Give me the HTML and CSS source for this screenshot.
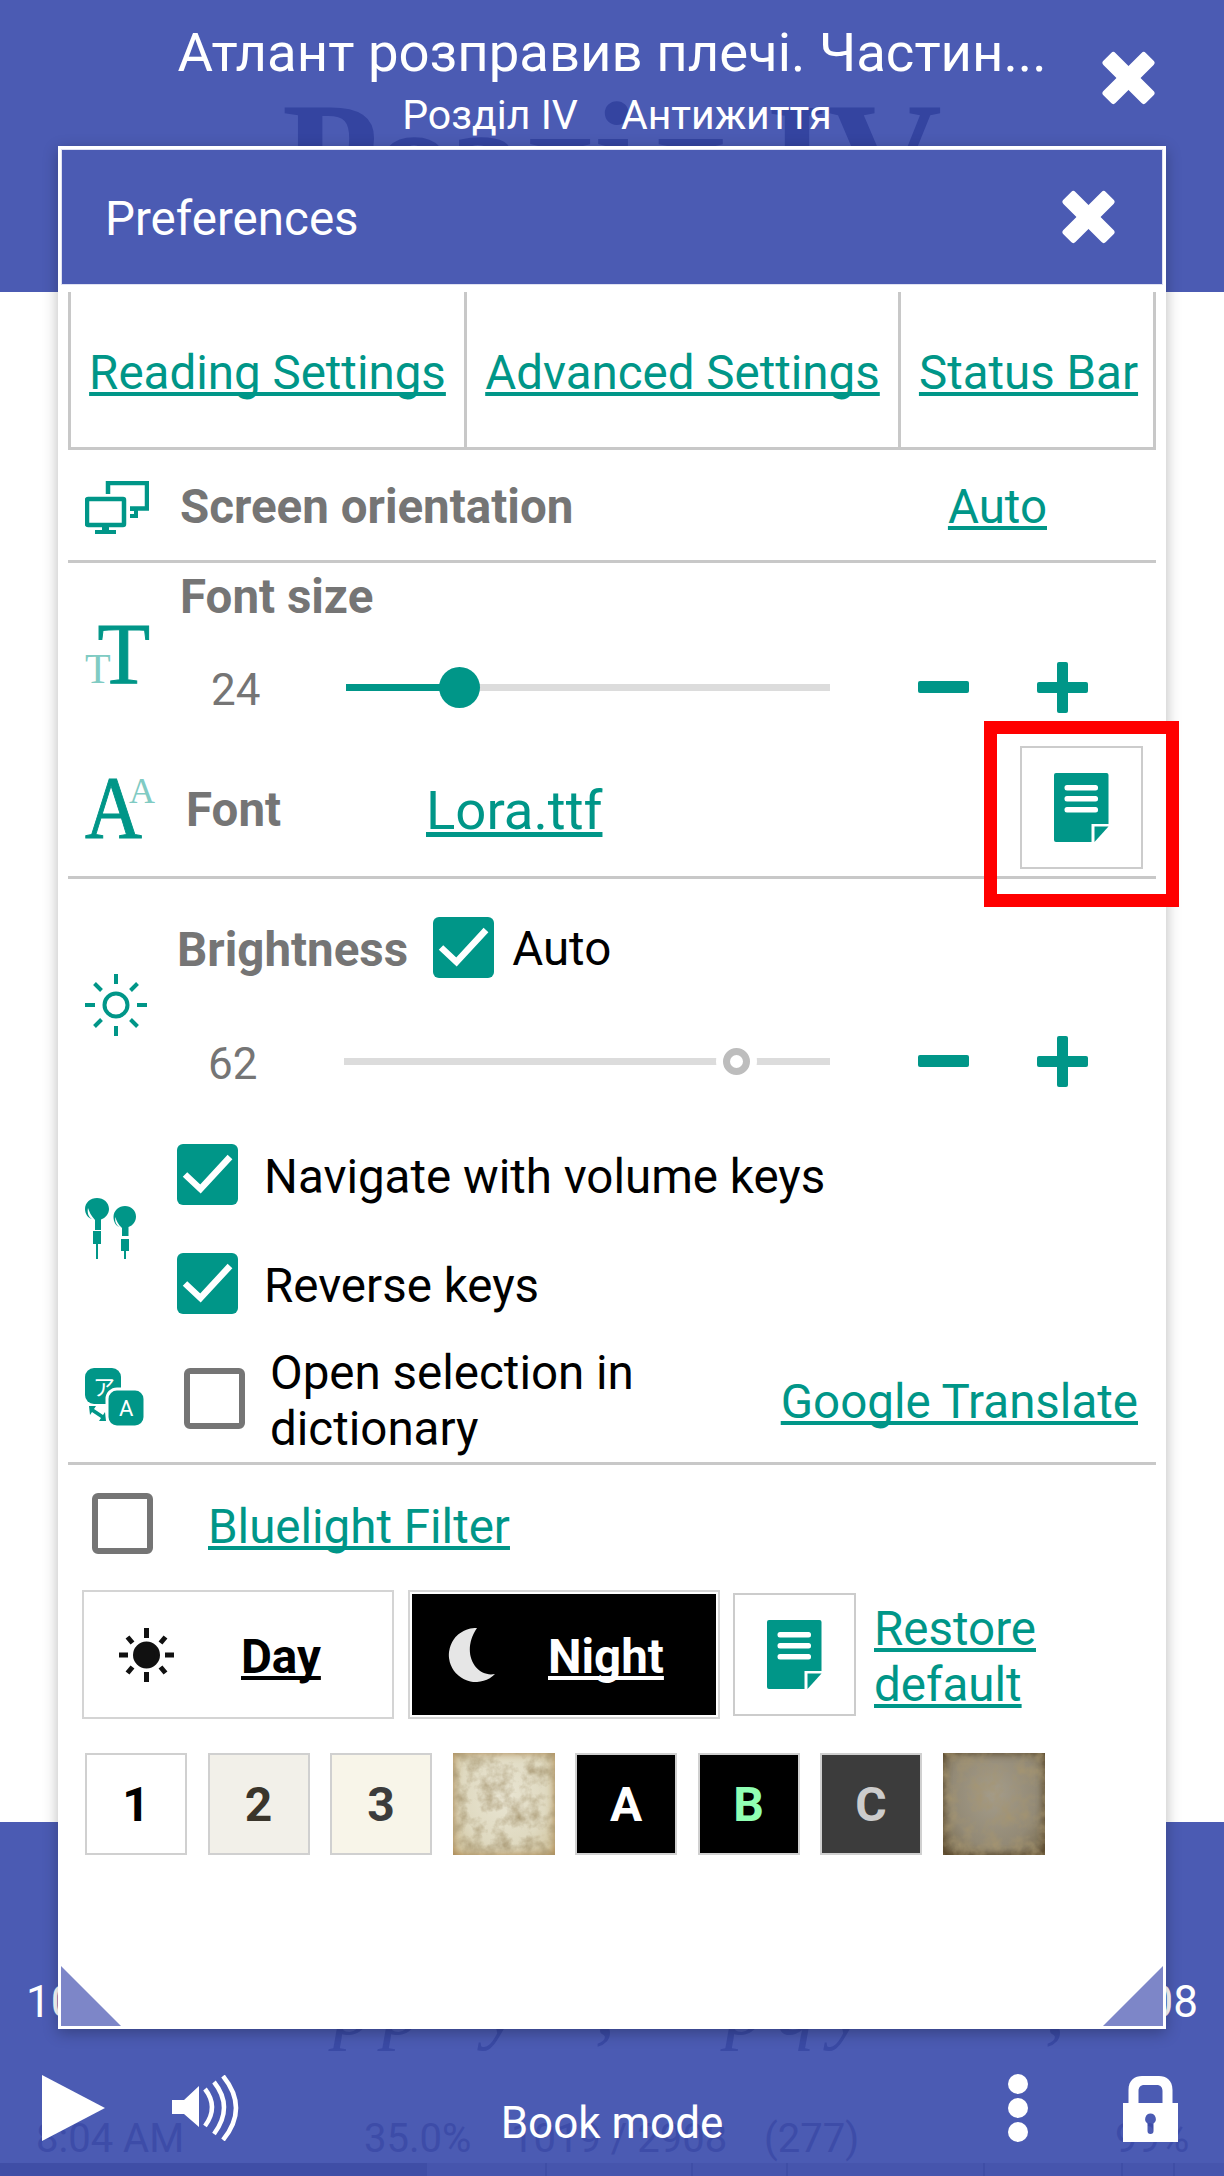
FILE: index.html
```html
<!DOCTYPE html>
<html lang="en">
<head>
    <meta charset="UTF-8">
    <meta name="viewport" content="width=device-width, initial-scale=1.0">
    <title>Preferences</title>
    <link rel="stylesheet" href="styles.css">
</head>
<body>
    <svg class="defs" width="0" height="0">
        <symbol id="i-close" viewBox="0 0 55 54">
            <rect x="-2.5" y="18.5" width="60" height="17" rx="3" transform="rotate(45 27.5 27)"/>
            <rect x="-2.5" y="18.5" width="60" height="17" rx="3" transform="rotate(-45 27.5 27)"/>
        </symbol>
        <symbol id="i-doc" viewBox="0 0 55 69">
            <path fill="#009688" d="M2 0H52.500a2 2 0 0 1 2 2V51H37.500V69H2a2 2 0 0 1-2-2V2a2 2 0 0 1 2-2Z"/>
            <path fill="#009688" d="M40.500 53.500H54.500L40.500 69Z"/>
            <rect x="10.500" y="12" width="33.500" height="5.500" rx="2.500" fill="#fff"/>
            <rect x="10.500" y="23" width="33.500" height="5.500" rx="2.500" fill="#fff"/>
            <rect x="10.500" y="34" width="33.500" height="5.500" rx="2.500" fill="#fff"/>
        </symbol>
        <symbol id="i-check" viewBox="0 0 61 61">
            <path d="M8 30.500L23.500 45L53 13" fill="none" stroke="#fff" stroke-width="6.500"/>
        </symbol>
        <filter id="paper-noise" x="0" y="0" width="100%" height="100%">
            <feTurbulence type="fractalNoise" baseFrequency="0.07" numOctaves="4" seed="7"/>
            <feColorMatrix values="0 0 0 0 0.38  0 0 0 0 0.30  0 0 0 0 0.16  0 0 0 1.6 -0.62"/>
        </filter>
    </svg>

    <div class="app">
        <header class="topbar">
            <div class="ghost-title">Розділ IV</div>
            <div class="topbar-text">
                <div class="book-title">Атлант розправив плечі. Частин...</div>
                <div class="book-sub"><span>Розділ IV</span><span>Антижиття</span></div>
            </div>
            <svg class="close-top"><use href="#i-close"/></svg>
        </header>

        <main class="reading"></main>

        <footer class="bottombar">
            <div class="ghost-line"><span>p</span><span>p</span><span>y</span><span>,</span><span>p</span><span>q</span><span>y</span><span>,</span></div>
            <div class="page-nums"><span>1019</span><span>2908</span></div>
            <div class="status">
                <span>8:04 AM</span><span>35.0%</span><span>1019 / 2908</span><span>(277)</span><span>99%</span>
            </div>
            <div class="controls">
                <div class="controls-left">
                    <svg class="play" viewBox="0 0 63 66"><path d="M0 0L63 33L0 66Z"/></svg>
                    <svg class="speaker" viewBox="0 0 67 66">
                        <path class="cone" d="M0 25H12L27 11V52L12 39H0Z"/>
                        <path d="M33 14Q47 32 33 51"/>
                        <path d="M42 7Q62 32 42 59"/>
                        <path d="M51 1Q77 33 51 65"/>
                    </svg>
                </div>
                <div class="book-mode">Book mode</div>
                <div class="controls-right">
                    <div class="dots"><i></i><i></i><i></i></div>
                    <svg class="lock" viewBox="0 0 55 68">
                        <path d="M5.500 30V16C5.500 6 12 2 19 2H36C43 2 49.500 6 49.500 16V30H39.500V17C39.500 13 37 11 34 11H21C18 11 15.500 13 15.500 17V30Z"/>
                        <path fill-rule="evenodd" d="M0 29H55V68H0ZM27.500 39.500a5.500 5.500 0 0 0-3 10V57a3 3 0 0 0 6 0V49.500a5.500 5.500 0 0 0-3-10Z"/>
                    </svg>
                </div>
            </div>
            <div class="progress">
                <div class="progress-fill"></div>
                <i class="tick t1"></i><i class="tick t2"></i><i class="tick t3"></i><i class="tick t4"></i><i class="tick t5"></i><i class="tick t6"></i>
            </div>
        </footer>
    </div>

    <section class="modal">
        <div class="modal-head">
            <span>Preferences</span>
            <svg class="close-modal"><use href="#i-close"/></svg>
        </div>

        <div class="modal-body">
            <nav class="tabs">
                <a>Reading Settings</a>
                <a>Advanced Settings</a>
                <a>Status Bar</a>
            </nav>

            <div class="row row-orient divider">
                <div class="icon-cell">
                    <svg class="ic-screen" viewBox="0 0 64 53">
                        <path class="line" d="M23 13V2H62V27.500H45"/>
                        <path class="fill" d="M45 26H53V37H45V33H49V30H45Z"/>
                        <rect class="line" x="2" y="18" width="37" height="26" rx="1"/>
                        <path class="fill" d="M17 45H24V49H31V53H10V49H17Z"/>
                    </svg>
                </div>
                <span class="label">Screen orientation</span>
                <a class="link auto-link">Auto</a>
            </div>

            <div class="block">
                <div class="icon-cell">
                    <svg class="ic-size" viewBox="0 0 66 100">
                        <text class="small" x="0" y="77">T</text>
                        <text class="big" x="12.500" y="77">T</text>
                    </svg>
                </div>
                <div class="block-main">
                    <div class="label label-size">Font size</div>
                    <div class="slider-row slider-row-size">
                        <span class="num">24</span>
                        <div class="slider">
                            <div class="slider-fill"></div>
                            <div class="thumb"></div>
                        </div>
                        <i class="minus"></i>
                        <i class="plus"></i>
                    </div>
                </div>
            </div>

            <div class="row row-font divider">
                <div class="icon-cell">
                    <svg class="ic-font" viewBox="0 0 72 100">
                        <text class="big" x="0" y="77" textLength="57" lengthAdjust="spacingAndGlyphs">A</text>
                        <text class="small" x="44" y="43">A</text>
                    </svg>
                </div>
                <span class="label label-font">Font</span>
                <a class="link lora">Lora.ttf</a>
                <div class="doc-btn doc-btn-font"><svg class="doc"><use href="#i-doc"/></svg></div>
            </div>

            <div class="block">
                <div class="icon-cell icon-cell-narrow">
                    <svg class="ic-sun" viewBox="0 0 62 62">
                        <circle cx="31" cy="31" r="11.500"/>
                        <path d="M31 0V10M31 52V62M0 31H10M52 31H62M9.500 9.500L16.500 16.500M45.500 45.500L52.500 52.500M9.500 52.500L16.500 45.500M45.500 16.500L52.500 9.500"/>
                    </svg>
                </div>
                <div class="block-main">
                    <div class="bright-head">
                        <span class="label">Brightness</span>
                        <div class="cb cb-on"><svg><use href="#i-check"/></svg></div>
                        <span class="opt-text">Auto</span>
                    </div>
                    <div class="slider-row slider-row-bright">
                        <span class="num">62</span>
                        <div class="slider slider-off">
                            <div class="thumb-off"></div>
                        </div>
                        <i class="minus"></i>
                        <i class="plus"></i>
                    </div>
                </div>
            </div>

            <div class="block">
                <div class="icon-cell icon-cell-narrow">
                    <svg class="ic-buds" viewBox="0 0 52 61">
                        <path class="fill" d="M12 0C18.500 0 24 4.500 24 11C24 16 20.500 20 16 21.500V32H10V22C6 18 4 13 3 10C2 15 3.500 19 7 21C3 20 0 16 0 11C0 4.500 5.500 0 12 0Z"/>
                        <path class="fill" d="M8 33H16V46H13V61H11V46H8Z"/>
                        <path class="fill" d="M40 8C46 8 51 12.500 51 18.500C51 23.500 48 27.500 43.500 29V38H37V30C33 26.500 31 22 30.500 19C29.500 23 31 27 34.500 29C31 28 28.500 24 28.500 19C28.500 12.500 34 8 40 8Z"/>
                        <path class="fill" d="M36 41H44V53H41V61H39V53H36Z"/>
                    </svg>
                </div>
                <div class="block-main">
                    <label class="check-row check-first">
                        <div class="cb cb-on"><svg><use href="#i-check"/></svg></div>
                        <span class="opt-text">Navigate with volume keys</span>
                    </label>
                    <label class="check-row check-second">
                        <div class="cb cb-on"><svg><use href="#i-check"/></svg></div>
                        <span class="opt-text">Reverse keys</span>
                    </label>
                </div>
            </div>

            <div class="row row-dict divider">
                <div class="icon-cell icon-cell-dict">
                    <svg class="ic-trans" viewBox="0 0 60 60">
                        <rect class="fill" x="0" y="0" width="36" height="36" rx="9"/>
                        <text class="kana" x="8" y="27">ア</text>
                        <rect class="fill" x="22" y="21" width="38" height="38" rx="10" stroke="#fff" stroke-width="3"/>
                        <text class="latin" x="34" y="48">A</text>
                        <path class="fill" d="M4 38H11L9 41L18 47L20 44L21 53H14L16 50L7 44L5 47Z"/>
                    </svg>
                </div>
                <div class="cb cb-off"></div>
                <span class="opt-text dict-text">Open selection in<br>dictionary</span>
                <a class="link translate-link">Google Translate</a>
            </div>

            <div class="row row-blue">
                <div class="cb cb-off"></div>
                <a class="link blue-link">Bluelight Filter</a>
            </div>

            <div class="row row-theme">
                <div class="theme theme-day">
                    <svg class="ic-day" viewBox="0 0 55 54">
                        <ellipse cx="27.500" cy="27" rx="11" ry="11"/>
                        <path d="M27.500 0V10M27.500 44V54M0 27H9M46 27H55M8.500 9L13.500 15M41.500 39L46.500 45M8.500 45L13.500 39M41.500 15L46.500 9"/>
                    </svg>
                    <a>Day</a>
                </div>
                <div class="theme theme-night">
                    <svg class="ic-moon" viewBox="0 0 49 54"><path d="M31 0A27 27 0 1 0 49 46C30 50 14 25 31 0Z"/></svg>
                    <a>Night</a>
                </div>
                <div class="doc-btn doc-btn-restore"><svg class="doc"><use href="#i-doc"/></svg></div>
                <a class="link restore-link">Restore<br>default</a>
            </div>

            <div class="swatches">
                <div class="swatch sw-1">1</div>
                <div class="swatch sw-2">2</div>
                <div class="swatch sw-3">3</div>
                <div class="swatch sw-paper"><svg class="paper"><rect class="paper-rect" width="102" height="102"/></svg></div>
                <div class="swatch sw-a">A</div>
                <div class="swatch sw-b">B</div>
                <div class="swatch sw-c">C</div>
                <div class="swatch sw-paper-dark"><svg class="paper"><rect class="paper-rect" width="102" height="102"/></svg></div>
            </div>
        </div>

        <div class="corner corner-left"></div>
        <div class="corner corner-right"></div>
    </section>

    <div class="highlight"></div>
</body>
</html>
```

FILE: styles.css
```css
* {
    box-sizing: border-box;
}

body {
    margin: 0;
    font-family: Roboto, "Noto Sans", sans-serif;
    background-color: #fff;
    overflow: hidden;
}

.defs {
    position: absolute;
}

a {
    text-decoration: underline;
    text-decoration-skip-ink: none;
}

svg {
    display: block;
}

.app {
    display: flex;
    flex-direction: column;
    height: 2176px;
}

/* top bar */
.topbar {
    position: relative;
    height: 292px;
    display: grid;
    grid-template-columns: 123px 1fr 123px;
    background-color: #4b5bb3;
    color: #fff;
    overflow: hidden;
}

.ghost-title {
    position: absolute;
    left: 0;
    right: 0;
    top: 84px;
    text-align: center;
    font-family: "Liberation Serif", serif;
    font-weight: bold;
    font-size: 158px;
    line-height: 150px;
    color: #3444a0;
}

.topbar-text {
    position: relative;
    grid-column: 2;
    padding-top: 22px;
    text-align: center;
}

.book-title {
    font-size: 54.500px;
    line-height: 60px;
    white-space: nowrap;
}

.book-sub {
    display: flex;
    justify-content: center;
    gap: 43px;
    margin-top: 8px;
    padding-left: 10px;
    font-size: 41px;
    line-height: 50px;
}

.close-top {
    position: relative;
    grid-column: 3;
    width: 55px;
    height: 54px;
    margin-top: 51px;
    fill: #fff;
}

.reading {
    flex: 1;
}

/* bottom bar */
.bottombar {
    position: relative;
    height: 354px;
    padding-top: 155px;
    background-color: #4b5bb3;
    color: #fff;
}

.ghost-line {
    position: absolute;
    left: 0;
    top: 135px;
    display: grid;
    grid-template-columns: 49px 102px 111px 130px 51px 54px 215px auto;
    padding-left: 333px;
    font-family: "Liberation Serif", serif;
    font-style: italic;
    font-size: 80px;
    line-height: 100px;
    color: #3a4aa5;
}

.page-nums {
    position: relative;
    display: flex;
    justify-content: space-between;
    padding: 0 26px;
    font-size: 44px;
    line-height: 50px;
}

.status {
    position: absolute;
    left: 0;
    right: 0;
    top: 292px;
    display: grid;
    grid-template-columns: 328px 147px 253px 351px auto;
    padding-left: 36px;
    font-size: 40px;
    line-height: 50px;
    white-space: nowrap;
    color: #3d4ca8;
}

.controls {
    position: relative;
    display: grid;
    grid-template-columns: 1fr auto 1fr;
    height: 68px;
    margin-top: 47px;
}

.controls-left {
    display: flex;
    gap: 67px;
    padding-left: 42px;
}

.play {
    width: 63px;
    height: 66px;
    margin-top: 1px;
    fill: #fff;
}

.speaker {
    width: 67px;
    height: 66px;
    margin-top: 1px;
    fill: none;
    stroke: #fff;
    stroke-width: 4.500;
}

.speaker .cone {
    fill: #fff;
    stroke: none;
}

.book-mode {
    margin-top: 24px;
    font-size: 44px;
    line-height: 50px;
}

.controls-right {
    display: flex;
    justify-content: flex-end;
    gap: 95px;
    padding-right: 46px;
}

.dots {
    display: flex;
    flex-direction: column;
    gap: 4px;
    width: 20px;
}

.dots i {
    display: block;
    height: 20px;
    border-radius: 50%;
    background-color: #fff;
}

.lock {
    width: 55px;
    height: 68px;
    fill: #fff;
}

.progress {
    position: relative;
    height: 13px;
    margin-top: 21px;
    background-color: #4655ad;
}

.progress-fill {
    width: 427px;
    height: 100%;
    background-color: #3f4ea6;
}

.tick {
    position: absolute;
    top: 0;
    width: 2px;
    height: 13px;
    background-color: #3f4ea6;
}

.t1 { left: 545px; }
.t2 { left: 691px; }
.t3 { left: 786px; }
.t4 { left: 983px; }
.t5 { left: 1121px; }
.t6 { left: 1173px; }

/* preferences window */
.modal {
    position: absolute;
    left: 58px;
    top: 146px;
    width: 1108px;
    height: 1883px;
    border: 3px solid #fff;
    background-color: #fff;
    box-shadow: 0 4px 14px rgba(0, 0, 0, 0.28);
}

.modal-head {
    display: flex;
    justify-content: space-between;
    align-items: center;
    height: 136px;
    padding: 0 46px 0 43px;
    background-color: #4b5bb3;
    border: 1px solid #dfe1f2;
    color: #fff;
    font-size: 47.500px;
}

.modal-head span {
    padding-top: 4px;
}

.close-modal {
    width: 55px;
    height: 54px;
    fill: #fff;
}

.modal-body {
    padding: 7px 7px 0;
}

.tabs {
    display: grid;
    grid-template-columns: 396px 434px 258px;
    height: 158px;
    border-bottom: 3px solid #c8c8c8;
    border-right: 3px solid #c8c8c8;
}

.tabs a {
    display: flex;
    justify-content: center;
    align-items: center;
    padding-top: 7px;
    border-left: 3px solid #c8c8c8;
    color: #009688;
    font-size: 47.500px;
    white-space: nowrap;
}

.row {
    display: flex;
    align-items: center;
}

.divider {
    border-bottom: 3px solid #c8c8c8;
}

.icon-cell {
    flex: none;
    width: 112px;
    padding-left: 17px;
}

.icon-cell-narrow {
    width: 109px;
}

.icon-cell-dict {
    width: 116px;
}

.label {
    font-size: 47.500px;
    font-weight: bold;
    line-height: 50px;
    color: #757575;
    white-space: nowrap;
}

.link {
    color: #009688;
    font-size: 47.500px;
    line-height: 56px;
    white-space: nowrap;
}

.opt-text {
    font-size: 47.500px;
    line-height: 56px;
    color: #000;
    white-space: nowrap;
}

.row-orient {
    height: 113px;
    padding-top: 4px;
}

.ic-screen {
    width: 64px;
    height: 53px;
}

.ic-screen .line {
    fill: none;
    stroke: #009688;
    stroke-width: 4.500;
}

.ic-screen .fill {
    fill: #009688;
}

.auto-link {
    margin-left: auto;
    margin-right: 109px;
}

.block {
    display: flex;
}

.ic-size {
    width: 66px;
    height: 100px;
    margin-top: 43px;
    font-family: "Liberation Serif", serif;
    fill: #009688;
}

.ic-size .big {
    font-size: 86px;
    stroke: #009688;
    stroke-width: 1;
}

.ic-size .small {
    font-size: 42px;
    fill: #80cbc3;
}

.block-main {
    flex: 1;
}

.label-size {
    margin-top: 9px;
}

.slider-row {
    display: flex;
    align-items: center;
    height: 80px;
}

.slider-row-size {
    margin-top: 25px;
    padding-left: 31px;
}

.slider-row-bright {
    margin-top: 43px;
    padding-left: 31px;
}

.num {
    flex: none;
    width: 135px;
    padding-top: 6px;
    font-size: 44px;
    color: #757575;
}

.slider {
    position: relative;
    flex: none;
    width: 484px;
    height: 7px;
    background-color: #dcdcdc;
}

.slider-off {
    width: 486px;
}

.slider-row-bright .num {
    width: 136px;
}

.slider-fill {
    width: 113px;
    height: 100%;
    background-color: #009688;
}

.thumb {
    position: absolute;
    left: 93px;
    top: -17px;
    width: 41px;
    height: 41px;
    border-radius: 50%;
    background-color: #009688;
}

.thumb-off {
    position: absolute;
    left: 379px;
    top: -10px;
    width: 27px;
    height: 27px;
    border: 7px solid #bdbdbd;
    border-radius: 50%;
    background-color: #fff;
    box-shadow: 0 0 0 7px #fff;
}

.minus {
    flex: none;
    width: 51px;
    height: 12px;
    margin-left: 88px;
    border-radius: 2px;
    background-color: #009688;
}

.plus {
    position: relative;
    flex: none;
    width: 51px;
    height: 11px;
    margin-left: 68px;
    border-radius: 2px;
    background-color: #009688;
}

.plus::after {
    content: "";
    position: absolute;
    left: 20px;
    top: -20px;
    width: 11px;
    height: 51px;
    border-radius: 2px;
    background-color: #009688;
}

.row-font {
    height: 152px;
    padding-top: 11px;
}

.ic-font {
    width: 72px;
    height: 100px;
    margin-top: 5px;
    font-family: "Liberation Serif", serif;
    fill: #009688;
}

.ic-font .big {
    font-size: 88px;
    stroke: #009688;
    stroke-width: 1;
}

.ic-font .small {
    font-size: 36px;
    fill: #80cbc3;
}

.label-font {
    width: 240px;
    margin-left: 6px;
    padding-top: 6px;
}

.lora {
    padding-top: 5px;
    font-size: 54.500px;
}

.doc-btn {
    display: flex;
    justify-content: center;
    align-items: center;
    flex: none;
    width: 123px;
    height: 123px;
    border: 2px solid #ccc;
}

.doc-btn-font {
    margin-left: auto;
    margin-right: 13px;
}

.doc {
    width: 55px;
    height: 69px;
}

.ic-sun {
    width: 62px;
    height: 62px;
    margin-top: 95px;
    fill: none;
    stroke: #009688;
    stroke-width: 4;
}

.bright-head {
    display: flex;
    align-items: center;
    height: 62px;
    margin-top: 37px;
}

.bright-head .label {
    padding-top: 6px;
}

.bright-head .cb {
    margin-left: 25px;
}

.bright-head .opt-text {
    margin-left: 18px;
    padding-top: 4px;
}

.cb {
    flex: none;
    width: 61px;
    height: 61px;
    border-radius: 6px;
}

.cb-on {
    background-color: #009688;
}

.cb-on svg {
    width: 61px;
    height: 61px;
}

.cb-off {
    border: 6px solid #757575;
}

.ic-buds {
    width: 52px;
    height: 61px;
    margin-top: 97px;
}

.ic-buds .fill {
    fill: #009688;
}

.check-row {
    display: flex;
    align-items: center;
    gap: 26px;
    height: 61px;
}

.check-row .opt-text {
    padding-top: 5px;
}

.check-first {
    margin-top: 43px;
}

.check-second {
    margin-top: 48px;
}

.row-dict {
    height: 151px;
    padding-top: 20px;
}

.ic-trans {
    width: 60px;
    height: 60px;
}

.ic-trans .fill {
    fill: #009688;
}

.ic-trans .kana {
    font-family: "Noto Sans CJK JP", sans-serif;
    font-size: 22px;
    fill: #fff;
}

.ic-trans .latin {
    font-size: 22px;
    fill: #fff;
}

.dict-text {
    margin-left: 25px;
    padding-top: 5px;
}

.translate-link {
    margin-left: auto;
    margin-right: 18px;
    padding-top: 8px;
}

.row-blue {
    height: 61px;
    margin-top: 28px;
    padding-left: 24px;
}

.blue-link {
    margin-left: 55px;
    padding-top: 7px;
}

.row-theme {
    margin-top: 36px;
    padding-left: 14px;
}

.theme {
    display: flex;
    align-items: center;
    flex: none;
    width: 312px;
    height: 129px;
    border: 2px solid #d4d4d4;
    font-size: 47.500px;
    font-weight: bold;
}

.theme a {
    padding-top: 5px;
}

.theme-day {
    padding-left: 35px;
    color: #000;
}

.theme-day a {
    margin-left: 67px;
}

.theme-night {
    margin-left: 14px;
    padding-left: 36px;
    background-color: #000;
    color: #fff;
    outline: 2px solid #fff;
    outline-offset: -4px;
}

.theme-night a {
    margin-left: 53px;
}

.ic-day {
    width: 55px;
    height: 54px;
    fill: #111;
    stroke: #111;
    stroke-width: 5;
}

.ic-moon {
    width: 49px;
    height: 54px;
    fill: #e6e6e6;
}

.doc-btn-restore {
    margin-left: 13px;
}

.restore-link {
    margin-left: 18px;
    margin-top: 5px;
}

.swatches {
    display: flex;
    gap: 20.500px;
    margin-top: 34px;
    padding-left: 17px;
}

.swatch {
    display: flex;
    justify-content: center;
    align-items: center;
    flex: none;
    width: 102px;
    height: 102px;
    border: 2px solid #d0d0d0;
    font-size: 48px;
    font-weight: bold;
}

.sw-1 { background-color: #fff; color: #000; }
.sw-2 { background-color: #f2f0e9; color: #3a352b; }
.sw-3 { background-color: #f8f5e9; color: #3c3c3c; }
.sw-a { background-color: #000; color: #fff; }
.sw-b { background-color: #000; color: #90ffb4; }
.sw-c { background-color: #3c3c3c; color: #ccc; }

.sw-paper {
    border: none;
    background: radial-gradient(ellipse at 50% 40%, #e9e5d3 0%, #dfd9c0 60%, #d2c6a2 88%, #c3ab7c 100%);
    box-shadow: inset 0 0 8px #a9834c;
}

.sw-paper-dark {
    border: none;
    background: radial-gradient(ellipse at 50% 40%, #a49c8a 0%, #938a76 60%, #7c6f54 88%, #65543a 100%);
    box-shadow: inset 0 0 8px #4e3a1c;
}

.paper {
    width: 102px;
    height: 102px;
}

.paper-rect {
    filter: url(#paper-noise);
}

.corner {
    position: absolute;
    bottom: 0;
    width: 60px;
    height: 60px;
    background-color: #7d86c8;
}

.corner-left {
    left: 0;
    clip-path: polygon(0 0, 100% 100%, 0 100%);
}

.corner-right {
    right: 0;
    clip-path: polygon(100% 0, 100% 100%, 0 100%);
}

/* red marker over the font button */
.highlight {
    position: absolute;
    left: 984px;
    top: 721px;
    width: 195px;
    height: 186px;
    border: 13px solid #f00;
}
```
